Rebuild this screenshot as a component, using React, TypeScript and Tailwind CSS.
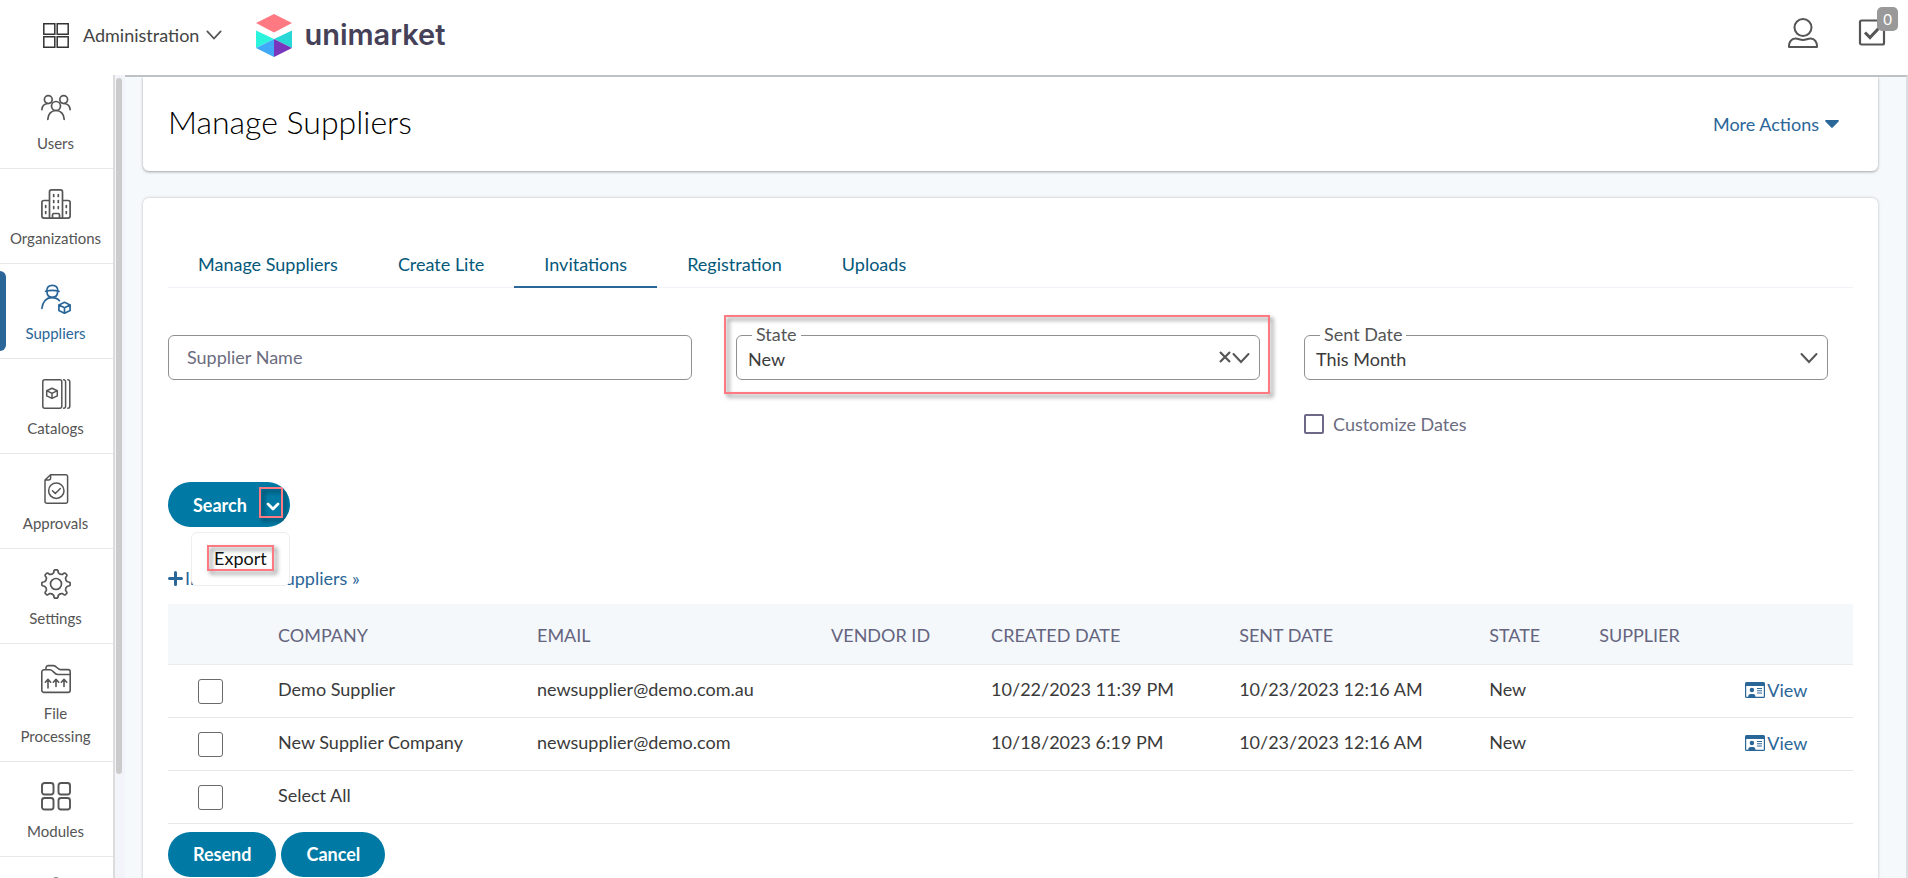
import type { ReactNode } from 'react'

type IconProps = { className?: string }

function Stroke({ children, className = 'size-[30px]', width = 1.5 }: IconProps & { children: ReactNode; width?: number }) {
  return (
    <svg viewBox="0 0 30 30" className={className} fill="none" stroke="currentColor" strokeWidth={width} strokeLinecap="round" strokeLinejoin="round" aria-hidden="true">
      {children}
    </svg>
  )
}

const UsersIcon = () => (
  <Stroke width={1.7}>
    <circle cx="7.3" cy="5.6" r="3.9" />
    <circle cx="22.7" cy="5.6" r="3.9" />
    <circle cx="15" cy="12" r="4.500" />
    <path d="M.9 15.600c.2-3.400 2.600-5.800 6-6.100M29.100 15.600c-.2-3.400-2.600-5.800-6-6.100M6.800 25.400c.2-5.400 3.600-8.900 8.200-8.900s8 3.500 8.200 8.900" />
  </Stroke>
)

const OrganizationsIcon = () => (
  <Stroke width={1.7}>
    <path d="M8.500 29.100V2.900a2 2 0 0 1 2-2h9a2 2 0 0 1 2 2v26.200M8.500 11.500H2.900a2 2 0 0 0-2 2v13.600a2 2 0 0 0 2 2h24.200a2 2 0 0 0 2-2V13.500a2 2 0 0 0-2-2h-5.600" />
    <path d="M11.500 29v-3a1.500 1.500 0 0 1 1.500-1.500h4a1.500 1.500 0 0 1 1.500 1.500v3M12.700 5.500v2M17.300 5.500v2M12.700 11.500v2M17.300 11.500v2M12.700 17.500v2M17.300 17.500v2M4.700 16.500v2M4.700 22.500v2M25.300 16.500v2M25.300 22.500v2" />
  </Stroke>
)

const SuppliersIcon = () => (
  <Stroke width={1.7}>
    <path d="M5.700 7.200c0-3.800 2.300-5.900 5.600-5.900s5.600 2.100 5.600 5.900M4.600 7.300c4-1 9.400-1 13.400 0M5.900 7.600c.2 3.600 2.400 5.700 5.400 5.700s5.200-2.100 5.400-5.700" />
    <path d="M.9 24.500c.4-6.200 4.200-10.800 9.700-10.800 3.400 0 6 1 7.800 3" />
    <path d="m23.500 18.300 5.600 2.700v5.600l-5.600 2.700-5.600-2.700V21zM17.900 21l5.600 2.800 5.600-2.800M23.500 23.800v5.500" />
  </Stroke>
)

const CatalogsIcon = () => (
  <Stroke>
    <rect x="1.800" y=".8" width="19" height="28.400" rx="2" />
    <path d="M22.600.8a2 2 0 0 1 2 2v24.400a2 2 0 0 1-2 2M26.800.8a2 2 0 0 1 2 2v24.400a2 2 0 0 1-2 2" />
    <path d="m11 9.200 5.300 2.500v5.100L11 19.400l-5.300-2.600v-5.100zM5.700 11.700l5.300 2.600 5.300-2.600M11 14.300v5" />
  </Stroke>
)

const ApprovalsIcon = () => (
  <Stroke>
    <path d="M9.500.8h15.300a1.800 1.800 0 0 1 1.800 1.800v24.800a1.800 1.800 0 0 1-1.800 1.800H5.800A1.800 1.800 0 0 1 4 27.400V6zM4 6h3.600a2 2 0 0 0 2-2V.8" />
    <circle cx="15.300" cy="16.700" r="7.700" />
    <path d="m11.500 16.800 2.800 2.700 5-5" />
  </Stroke>
)

const polar = (r: number, deg: number) => {
  const a = (deg * Math.PI) / 180
  return `${(15 + r * Math.cos(a)).toFixed(2)} ${(15 + r * Math.sin(a)).toFixed(2)}`
}

const GEAR = Array.from({ length: 8 }, (_, i) => {
  const c = i * 45
  const start = `${i === 0 ? 'M' : 'L'}${polar(11.7, c - 11)}`
  return `${start}Q${polar(14.3, c - 9)} ${polar(14.2, c - 3)}L${polar(14.2, c + 3)}Q${polar(14.3, c + 9)} ${polar(11.7, c + 11)}Q${polar(9.8, c + 22.5)} ${polar(11.7, c + 34)}`
}).join('')

const SettingsIcon = () => (
  <Stroke width={1.7}>
    <circle cx="15" cy="15" r="5.500" />
    <path d={`${GEAR}Z`} />
  </Stroke>
)

const FilesIcon = () => (
  <Stroke width={1.6}>
    <path d="M29.200 10.500v15.700a2.200 2.200 0 0 1-2.200 2.200H3a2.200 2.200 0 0 1-2.200-2.200V8A2.200 2.200 0 0 1 3 5.800h6.200c2.800 0 4.300 4.700 7.300 4.700zM5 5.500V3.800a2.200 2.200 0 0 1 2.200-2.200h5.400c2.900 0 3.600 4 6.800 4h7.700a2.100 2.100 0 0 1 2.100 2.100v3" />
    <path d="M7 24v-8.500m-2.700 2.700L7 15.300l2.700 2.900M15 22.500v-7m-2.700 2.700 2.700-2.900 2.700 2.900M23 22.500v-7m-2.700 2.700 2.700-2.900 2.700 2.900" />
  </Stroke>
)

const ModulesIcon = () => (
  <Stroke width={1.9}>
    <rect x="1" y="1" width="11.500" height="11.500" rx="2.500" />
    <rect x="17.500" y="1" width="11.500" height="11.500" rx="2.500" />
    <rect x="1" y="16" width="11.500" height="11.500" rx="2.500" />
    <rect x="17.500" y="16" width="11.500" height="11.500" rx="2.500" />
  </Stroke>
)

const MoreIcon = () => (
  <Stroke>
    <circle cx="15" cy="6" r="5" />
  </Stroke>
)

function Chevron({ className }: IconProps) {
  return (
    <svg viewBox="0 0 18 18" className={className} fill="none" stroke="currentColor" strokeWidth="2" strokeLinecap="round" aria-hidden="true">
      <path d="m1.500 5 7.500 8 7.500-8" />
    </svg>
  )
}

function Logo() {
  return (
    <a href="#home" className="flex items-center gap-3">
      <svg viewBox="0 0 36 43" className="h-[43px] w-9" aria-hidden="true">
        <path d="M18 0 36 9 18 18.500 0 9z" fill="#ff7983" />
        <path d="M0 16.500 18 25 0 34z" fill="#2cf3dc" />
        <path d="M36 16.500 18 25l18 9z" fill="#27d8d6" />
        <path d="M18 25v18L0 34z" fill="#40aaf8" />
        <path d="M18 25v18l18-9z" fill="#7a35bd" />
      </svg>
      <span className="font-[Inter,sans-serif] text-[29px] leading-9 font-semibold text-[#454158]">unimarket</span>
    </a>
  )
}

const NAV: { label: string; icon: ReactNode; active?: boolean }[] = [
  { label: 'Users', icon: <UsersIcon /> },
  { label: 'Organizations', icon: <OrganizationsIcon /> },
  { label: 'Suppliers', icon: <SuppliersIcon />, active: true },
  { label: 'Catalogs', icon: <CatalogsIcon /> },
  { label: 'Approvals', icon: <ApprovalsIcon /> },
  { label: 'Settings', icon: <SettingsIcon /> },
  { label: 'File Processing', icon: <FilesIcon /> },
  { label: 'Modules', icon: <ModulesIcon /> },
]

function Sidebar() {
  return (
    <div className="flex shrink-0">
      <nav aria-label="Administration" className="w-[113px] overflow-hidden bg-white">
        <ul className="-mt-px">
          {NAV.map((n) => (
            <li key={n.label} className="relative border-b border-[#e8e8e8]">
              {n.active && <span className="absolute inset-y-[7px] left-0 w-1.5 rounded-r-md bg-[#2a6698]" />}
              <a
                href="#nav"
                className={
                  n.active
                    ? 'flex flex-col items-center pt-5 pr-3 pb-[13px] pl-2.5 text-center text-[15px] leading-[23px] text-[#2a6698]'
                    : 'flex flex-col items-center pt-5 pr-3 pb-[13px] pl-2.5 text-center text-[15px] leading-[23px] text-[#555]'
                }
              >
                {n.icon}
                <span className="mt-2">{n.label}</span>
              </a>
            </li>
          ))}
          <li>
            <a href="#nav" aria-label="More" className="flex flex-col items-center pt-5 pr-3 pl-2.5 text-[#555]">
              <MoreIcon />
            </a>
          </li>
        </ul>
      </nav>
      <div className="flex w-3 border-l-2 border-[#dcdcdc] bg-[#f3f4f9] pt-[3px]">
        <div className="ml-px h-[87%] w-1.5 rounded-full bg-[#cbcbcb]" />
      </div>
    </div>
  )
}

function Header() {
  return (
    <header className="relative z-10 flex h-[75px] shrink-0 items-center bg-white pr-[22px] pb-[5px] pl-[43px]">
      <button type="button" className="flex items-center text-lg text-[#444]">
        <svg viewBox="0 0 26 25" className="h-[25px] w-[26px]" fill="none" stroke="#333" strokeWidth="1.500" aria-hidden="true">
          <path d="M.8.800h11v10.400h-11zM14.200.800h11v10.400h-11zM.8 13.800h11v10.400h-11zM14.200 13.800h11v10.400h-11z" />
        </svg>
        <span className="ml-3.5">Administration</span>
        <Chevron className="ml-[7px] size-4 text-[#555]" />
      </button>
      <div className="ml-[34px]">
        <Logo />
      </div>
      <div className="mb-1 ml-auto flex items-center gap-10">
        <button type="button" aria-label="Account" className="text-[#555]">
          <Stroke width={2}>
            <circle cx="15" cy="9.500" r="8.500" />
            <path d="M1 29c-.2-5.200 2.500-8.500 6.300-8.500 3.200 0 4.600 1.500 7.700 1.500s4.500-1.500 7.700-1.500c3.800 0 6.500 3.300 6.300 8.500z" />
          </Stroke>
        </button>
        <button type="button" aria-label="Tasks" className="relative text-[#555]">
          <svg viewBox="0 0 28 28" className="size-7" fill="none" stroke="currentColor" strokeWidth="2.200" aria-hidden="true">
            <rect x="2" y="1.500" width="24" height="24" rx="1.500" />
            <path d="m7 13.500 5 5 8.500-9" strokeWidth="3" />
          </svg>
          <span className="absolute -top-3 -right-3 flex h-6 w-[21px] items-center justify-center rounded-[5px] bg-[#999] text-[15px] text-white">0</span>
        </button>
      </div>
    </header>
  )
}

const TABS = ['Manage Suppliers', 'Create Lite', 'Invitations', 'Registration', 'Uploads']

function Tabs() {
  return (
    <div role="tablist" className="flex border-b border-[#f1f1f7]">
      {TABS.map((t) => (
        <button
          key={t}
          type="button"
          role="tab"
          aria-selected={t === 'Invitations'}
          className={
            t === 'Invitations'
              ? '-mb-px h-[46px] border-b-2 border-[#2a6698] px-[30px] text-lg text-[#04587a]'
              : '-mb-px h-[46px] border-b-2 border-transparent px-[30px] text-lg text-[#04587a]'
          }
        >
          {t}
        </button>
      ))}
    </div>
  )
}

function SelectField({ id, label, value, clearable }: { id: string; label: string; value: string; clearable?: boolean }) {
  return (
    <div className="relative h-[45px]">
      <select id={id} defaultValue={value} className="size-full appearance-none rounded-md border border-[#909090] bg-white px-[11px] pt-0.5 text-lg text-[#3a3a3a]">
        <option>{value}</option>
      </select>
      <label htmlFor={id} className="absolute -top-[13px] left-4 bg-white px-1 text-lg leading-6 text-[#555]">
        {label}
      </label>
      {clearable && (
        <button type="button" aria-label="Clear state" className="absolute top-4 right-[29px]">
          <svg viewBox="0 0 12 12" className="size-3" stroke="#555" strokeWidth="2.200" aria-hidden="true">
            <path d="m1 1 10 10M11 1 1 11" />
          </svg>
        </button>
      )}
      <Chevron className="pointer-events-none absolute top-3.5 right-2.5 size-[18px] text-[#555]" />
    </div>
  )
}

const MARK = 'pointer-events-none absolute border-2 border-[#ff7983] drop-shadow-[3px_3px_2px_rgba(0,0,0,0.5)]'

function Filters() {
  return (
    <div className="mt-[47px] grid grid-cols-3 gap-x-11 pr-[25px]">
      <input aria-label="Supplier Name" placeholder="Supplier Name" className="h-[45px] rounded-md border border-[#909090] px-[18px] pb-0.5 text-lg placeholder:text-[#6c6c80]" />
      <div className="relative">
        <SelectField id="state" label="State" value="New" clearable />
        <span className={`${MARK} -top-5 -right-2.5 -left-3 h-[79px]`} />
      </div>
      <div>
        <SelectField id="sent" label="Sent Date" value="This Month" />
        <label className="mt-8 flex items-center gap-[9px] text-lg leading-6 text-[#6c6c80]">
          <input type="checkbox" className="size-5 appearance-none rounded-[2px] border-2 border-[#6c6888]" />
          Customize Dates
        </label>
      </div>
    </div>
  )
}

function SearchBar() {
  return (
    <div className="relative mt-[46px] w-fit">
      <div className="flex h-[45px] overflow-hidden rounded-full bg-[#007aa5] text-white">
        <button type="button" className="pr-3 pl-[25px] text-lg font-bold">Search</button>
        <button type="button" aria-label="More search actions" aria-expanded="true" className="relative flex w-[31px] items-center pl-[7px]">
          <svg viewBox="0 0 14 10" className="mt-1 h-2.5 w-3.5" fill="none" stroke="currentColor" strokeWidth="2.800" strokeLinecap="round" strokeLinejoin="round" aria-hidden="true">
            <path d="m2 2 5 5 5-5" />
          </svg>
          <span className={`${MARK} top-[5px] left-0 h-[31px] w-6`} />
        </button>
      </div>
      <div role="menu" className="absolute top-[50px] right-0 z-10 flex h-[54px] w-[99px] items-center justify-center rounded-md border border-[#eee] bg-white">
        <button type="button" role="menuitem" className="relative mb-0.5 flex h-[26px] items-center px-[7px] text-lg text-[#111]">
          Export
          <span className={`${MARK} inset-0`} />
        </button>
      </div>
    </div>
  )
}

const INVITES = [
  { company: 'Demo Supplier', email: 'newsupplier@demo.com.au', created: '10/22/2023 11:39 PM', sent: '10/23/2023 12:16 AM', state: 'New' },
  { company: 'New Supplier Company', email: 'newsupplier@demo.com', created: '10/18/2023 6:19 PM', sent: '10/23/2023 12:16 AM', state: 'New' },
]

function Check({ label }: { label: string }) {
  return <input type="checkbox" aria-label={label} className="mt-[5px] block size-[25px] appearance-none rounded-[3px] border border-[#6a6a6a] bg-white" />
}

function CardIcon() {
  return (
    <svg viewBox="0 0 20 16" className="h-4 w-5" fill="#2a6698" aria-hidden="true">
      <path fillRule="evenodd" d="M1.500 0h17A1.500 1.500 0 0 1 20 1.500v13a1.500 1.500 0 0 1-1.500 1.500h-17A1.500 1.500 0 0 1 0 14.500v-13A1.500 1.500 0 0 1 1.500 0M1.200 4v10.500c0 .2.100.3.300.3h1.700c0-1.700 1-2.800 2.300-2.800h2.700c1.300 0 2.300 1.100 2.300 2.800h8c.2 0 .3-.1.300-.3V4z" />
      <circle cx="6.900" cy="8" r="2.200" />
      <path d="M12 6h5v1h-5zM12 8.200h5v1h-5zM12 10.400h5v1h-5z" />
    </svg>
  )
}

function InvitationTable() {
  return (
    <table className="mt-3.5 w-full table-fixed border-collapse text-left text-lg">
      <colgroup>
        <col className="w-[4.75%]" />
        <col className="w-[15.37%]" />
        <col className="w-[17.45%]" />
        <col className="w-[9.5%]" />
        <col className="w-[14.72%]" />
        <col className="w-[14.84%]" />
        <col className="w-[6.53%]" />
        <col className="w-[8.55%]" />
        <col />
      </colgroup>
      <thead className="bg-[#f4f8fb] text-[#64647e]">
        <tr className="h-[60px] border-b border-[#ebebeb]">
          <th aria-label="Selected" />
          {['COMPANY', 'EMAIL', 'VENDOR ID', 'CREATED DATE', 'SENT DATE', 'STATE', 'SUPPLIER'].map((h) => (
            <th key={h} className="pt-0.5 pl-[30px] font-normal">{h}</th>
          ))}
          <th aria-label="Actions" />
        </tr>
      </thead>
      <tbody className="text-[#3a3a3a]">
        {INVITES.map((r) => (
          <tr key={r.company} className="h-[53px] border-b border-[#e8e8e8]">
            <td className="pb-1 pl-[30px]"><Check label={`Select ${r.company}`} /></td>
            <td className="pb-1 pl-[30px]">{r.company}</td>
            <td className="pb-1 pl-[30px]">{r.email}</td>
            <td />
            <td className="pb-1 pl-[30px]">{r.created}</td>
            <td className="pb-1 pl-[30px]">{r.sent}</td>
            <td className="pb-1 pl-[30px]">{r.state}</td>
            <td />
            <td className="pb-0.5 pl-8">
              <a href="#view" className="flex items-center gap-0.5 text-[#2a6698]">
                <CardIcon />
                View
              </a>
            </td>
          </tr>
        ))}
        <tr className="h-[53px] border-b border-[#e8e8e8]">
          <td className="pb-1 pl-[30px]"><Check label="Select all invitations" /></td>
          <td className="pb-1 pl-[30px]" colSpan={8}>Select All</td>
        </tr>
      </tbody>
    </table>
  )
}

export default function App() {
  return (
    <div className="flex h-screen flex-col overflow-hidden bg-[#f5f9fc] font-[Lato,sans-serif]">
      <Header />
      <div className="flex min-h-0 flex-1">
        <Sidebar />
        <main className="min-w-0 flex-1 overflow-hidden border-t-2 border-r-2 border-t-[#bfc2c5] border-r-[#dcdfe2] pr-7 pl-[18px]">
          <section className="flex h-[94px] items-center justify-between rounded-b-md bg-white pr-[39px] pl-[25px] shadow-[0_1px_3px_rgba(0,0,0,0.35)]">
            <h1 className="pb-1 text-[32px] font-light text-black">Manage Suppliers</h1>
            <button type="button" className="flex items-center gap-1.5 text-lg text-[#2a6698]">
              More Actions
              <svg viewBox="0 0 14 8" className="h-2 w-3.5" fill="currentColor" aria-hidden="true">
                <path d="M1 0h12c.9 0 1.200.800.600 1.400L7.700 7.600c-.4.400-1 .4-1.400 0L.4 1.400C-.2.800.1 0 1 0" />
              </svg>
            </button>
          </section>
          <section className="mt-[27px] rounded-t-md bg-white px-[25px] pt-11 pb-10 shadow-[0_0_3px_rgba(0,0,0,0.25)]">
            <Tabs />
            <Filters />
            <SearchBar />
            <a href="#invite" className="mt-[39px] flex w-fit items-center gap-0.5 text-lg leading-6 text-[#2a6698]">
              <svg viewBox="0 0 15 15" className="size-[15px]" stroke="currentColor" strokeWidth="3" strokeLinecap="round" aria-hidden="true">
                <path d="M7.500 1.500v12M1.500 7.500h12" />
              </svg>
              Invite New Suppliers »
            </a>
            <InvitationTable />
            <div className="mt-2 flex gap-[5px]">
              {['Resend', 'Cancel'].map((b) => (
                <button key={b} type="button" className="h-[45px] rounded-full bg-[#007aa5] px-[25px] text-lg font-bold text-white">{b}</button>
              ))}
            </div>
          </section>
        </main>
      </div>
    </div>
  )
}
